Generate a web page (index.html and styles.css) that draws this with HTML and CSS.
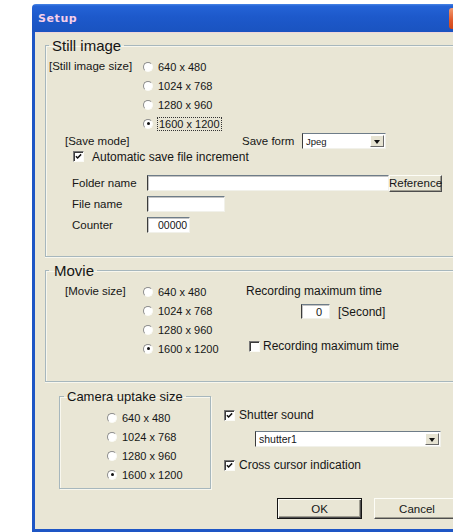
FILE: index.html
```html
<!DOCTYPE html>
<html lang="en">
<head>
<meta charset="utf-8">
<title>Setup</title>
<link rel="stylesheet" href="styles.css">
</head>
<body>
<div class="window">
  <div class="titlebar">
    <span class="title">Setup</span>
    <span class="close"></span>
  </div>
  <div class="client">

    <fieldset class="group group-still">
      <legend>Still image</legend>
      <div class="size-block">
        <div class="size-label">[Still image size]</div>
        <div class="radio-list">
          <div class="radio"><i class="rb"></i>640 x 480</div>
          <div class="radio"><i class="rb"></i>1024 x 768</div>
          <div class="radio"><i class="rb"></i>1280 x 960</div>
          <div class="radio"><i class="rb on"></i><span class="focus">1600 x 1200</span></div>
        </div>
      </div>
      <div class="save-row">
        <span class="save-mode">[Save mode]</span>
        <span class="save-form">Save form</span>
        <span class="combo combo-format"><span class="combo-text">Jpeg</span><span class="combo-btn"></span></span>
      </div>
      <div class="check auto-inc">
        <i class="cb"><svg viewBox="0 0 11 11"><path d="M2.3 5.1 4.4 7.3 8.7 2.9"/></svg></i>Automatic save file increment
      </div>
      <div class="fields">
        <span class="field-label">Folder name</span>
        <span class="folder-row"><span class="edit edit-folder"></span><span class="btn btn-ref">Reference</span></span>
        <span class="field-label">File name</span>
        <span class="edit edit-file"></span>
        <span class="field-label">Counter</span>
        <span class="edit edit-counter">00000</span>
      </div>
    </fieldset>

    <fieldset class="group group-movie">
      <legend>Movie</legend>
      <div class="movie-body">
        <div class="size-block movie-size">
          <div class="size-label">[Movie size]</div>
          <div class="radio-list">
            <div class="radio"><i class="rb"></i>640 x 480</div>
            <div class="radio"><i class="rb"></i>1024 x 768</div>
            <div class="radio"><i class="rb"></i>1280 x 960</div>
            <div class="radio"><i class="rb on"></i>1600 x 1200</div>
          </div>
        </div>
        <div class="rec-col">
          <div class="rec-title">Recording maximum time</div>
          <div class="rec-time">
            <span class="edit edit-seconds">0</span>
            <span class="seconds">[Second]</span>
          </div>
          <div class="check rec-check"><i class="cb"></i>Recording maximum time</div>
        </div>
      </div>
    </fieldset>

    <div class="lower">
      <fieldset class="group group-camera">
        <legend>Camera uptake size</legend>
        <div class="radio-list camera-list">
          <div class="radio"><i class="rb"></i>640 x 480</div>
          <div class="radio"><i class="rb"></i>1024 x 768</div>
          <div class="radio"><i class="rb"></i>1280 x 960</div>
          <div class="radio"><i class="rb on"></i>1600 x 1200</div>
        </div>
      </fieldset>
      <div class="camera-side">
        <div class="check shutter-check">
          <i class="cb"><svg viewBox="0 0 11 11"><path d="M2.3 5.1 4.4 7.3 8.7 2.9"/></svg></i>Shutter sound
        </div>
        <span class="combo combo-sound"><span class="combo-text">shutter1</span><span class="combo-btn"></span></span>
        <div class="check cross-check">
          <i class="cb"><svg viewBox="0 0 11 11"><path d="M2.3 5.1 4.4 7.3 8.7 2.9"/></svg></i>Cross cursor indication
        </div>
      </div>
    </div>

    <div class="actions">
      <span class="btn btn-default">OK</span>
      <span class="btn btn-cancel">Cancel</span>
    </div>
  </div>
</div>
</body>
</html>
```

FILE: styles.css
```css
* {
  box-sizing: border-box;
}

html,
body {
  margin: 0;
  padding: 0;
  background: #fff;
  overflow: hidden;
}

body {
  width: 453px;
  height: 532px;
  font-family: "Liberation Sans", Arial, sans-serif;
  font-size: 12px;
  color: #161616;
}

/* window frame: the dialog runs on past the right edge of the view */
.window {
  margin: 4px 0 0 32px;
  width: 421px;
  height: 528px;
  display: flex;
  flex-direction: column;
}

.titlebar {
  flex: 0 0 28px;
  display: flex;
  align-items: center;
  justify-content: space-between;
  padding: 0 0 0 6px;
  background: linear-gradient(180deg, #4a86e6 0, #2463d6 2px, #1d59cb 45%, #1a53c0 100%);
  border-top-left-radius: 4px;
}

.title {
  font-family: "DejaVu Sans", Verdana, sans-serif;
  font-weight: bold;
  font-size: 11px;
  letter-spacing: 0.6px;
  color: #f6cfe9;
}

.close {
  width: 4px;
  height: 21px;
  border-radius: 3px 0 0 3px;
  background: linear-gradient(180deg, #f29a6e, #e0582a 60%, #d04818);
}

.client {
  flex: 1;
  display: flex;
  flex-direction: column;
  background: #e9e6d5;
  border-left: 3px solid #1e56c5;
  border-bottom: 3px solid #1e56c5;
  box-shadow: inset 0 1px 0 #efd6da;
  padding: 5px 0 0 10px;
}

/* group boxes */
.group {
  margin: 0;
  padding: 0 0 0 3px;
  min-width: 0;
  border: 1px solid #a7b7bd;
  border-right: 0;
  box-shadow: inset 1px 1px 0 #f8f7ee, 0 1px 0 #f8f7ee;
}

.group legend {
  padding: 0 3px;
  font-size: 15px;
  line-height: 17px;
  color: #141414;
}

.group-still {
  padding-top: 3px;
  padding-bottom: 23px;
}

.group-movie {
  margin-top: 5px;
  padding-top: 3px;
  padding-bottom: 23px;
}

.group-movie legend {
  padding-left: 5px;
}

/* radio buttons */
.size-block {
  display: flex;
}

.size-label {
  width: 94px;
  line-height: 19px;
  font-size: 11.5px;
}

.radio-list {
  display: flex;
  flex-direction: column;
}

.radio {
  height: 19px;
  display: flex;
  align-items: center;
  gap: 5px;
  font-size: 11px;
}

.rb {
  position: relative;
  width: 10px;
  height: 10px;
  border-radius: 50%;
  background: #fff;
  border: 1px solid;
  border-color: #8c8c8c #fbfbf6 #fbfbf6 #8c8c8c;
}

.rb.on::after {
  content: "";
  position: absolute;
  left: 2.5px;
  top: 2.5px;
  width: 3px;
  height: 3px;
  border-radius: 50%;
  background: #111;
}

.focus {
  outline: 1px dotted #333;
  outline-offset: 0;
  padding: 0 1px;
}

/* check boxes */
.check {
  display: flex;
  align-items: center;
}

.cb {
  display: inline-flex;
  width: 11px;
  height: 11px;
  background: #fff;
  border: 1px solid;
  border-color: #777 #fbfbf6 #fbfbf6 #777;
  box-shadow: inset 1px 1px 0 #3a3a3a;
}

.cb svg {
  width: 100%;
  height: 100%;
}

.cb path {
  fill: none;
  stroke: #111;
  stroke-width: 1.8;
}

/* still image section */
.save-row {
  display: flex;
  align-items: center;
  height: 16px;
}

.save-mode {
  margin-left: 16px;
  width: 177px;
  font-size: 11.5px;
}

.save-form {
  width: 60px;
  font-size: 11.5px;
}

.auto-inc {
  height: 15px;
  margin-left: 24px;
  gap: 8px;
}

.fields {
  margin: 11px 0 0 23px;
  display: grid;
  grid-template-columns: 75px auto;
  grid-auto-rows: 16px;
  row-gap: 5px;
  align-items: center;
  justify-items: start;
}

.field-label {
  font-size: 11.5px;
}

.folder-row {
  display: flex;
  align-items: center;
}

/* edit fields and combos */
.edit {
  display: inline-flex;
  align-items: center;
  height: 16px;
  background: #fff;
  border: 1px solid;
  border-color: #6e7c88 #f1f1ea #f1f1ea #3c3c3c;
  box-shadow: inset 1px 1px 0 #c4c4c4;
  font-size: 11px;
}

.edit-folder {
  width: 242px;
}

.edit-file {
  width: 78px;
}

.edit-counter {
  width: 43px;
  padding-left: 10px;
  font-size: 10.5px;
}

.combo {
  display: inline-flex;
  align-items: stretch;
  height: 16px;
  background: #fff;
  border: 1px solid;
  border-color: #6e7c88 #f1f1ea #f1f1ea #3c3c3c;
}

.combo-text {
  flex: 1;
  display: flex;
  align-items: center;
  padding-left: 3px;
  font-size: 9.5px;
}

.combo-btn {
  position: relative;
  width: 14px;
  margin: 1px;
  background: #e6e3d2;
  border: 1px solid;
  border-color: #fff #6a6a6a #6a6a6a #fff;
}

.combo-btn::after {
  content: "";
  position: absolute;
  left: 3px;
  top: 4px;
  border-style: solid;
  border-width: 4px 3.5px 0 3.5px;
  border-color: #111 transparent transparent transparent;
}

.combo-format {
  width: 84px;
}

/* buttons */
.btn {
  display: inline-flex;
  align-items: center;
  justify-content: center;
  height: 21px;
  width: 85px;
  background: #e9e6d5;
  border: 1px solid;
  border-color: #fdfdf7 #4e4e4e #4e4e4e #fdfdf7;
  box-shadow: inset -1px -1px 0 #a09e91;
  font-size: 11.5px;
}

.btn-ref {
  width: 53px;
  height: 17px;
}

.btn-default {
  border: 1px solid #151515;
  box-shadow: inset 1px 1px 0 #fdfdf7, inset -1px -1px 0 #4e4e4e, inset -2px -2px 0 #a09e91;
}

/* the cancel button is cut by the right edge of the view */
.btn-cancel {
  width: 79px;
  padding-left: 6px;
  border-right: 0;
  box-shadow: inset 0 -1px 0 #a09e91;
}

/* movie section */
.movie-body {
  display: flex;
}

.movie-size {
  width: 197px;
}

.movie-size .size-label {
  padding-left: 16px;
}

.rec-col {
  display: flex;
  flex-direction: column;
}

.rec-title {
  line-height: 19px;
}

.rec-time {
  display: flex;
  align-items: center;
  margin-top: 3px;
  height: 15px;
}

.edit-seconds {
  width: 29px;
  height: 15px;
  margin-left: 55px;
  justify-content: flex-end;
  padding-right: 7px;
}

.seconds {
  margin-left: 8px;
}

.rec-check {
  height: 16px;
  margin: 19px 0 0 3px;
  gap: 3px;
}

/* camera section */
.lower {
  display: flex;
  align-items: flex-start;
  margin-top: 7px;
}

.group-camera {
  margin-left: 14px;
  width: 152px;
  padding: 4px 0 4px 4px;
  border-right: 1px solid #a7b7bd;
  box-shadow: inset 1px 1px 0 #f8f7ee, 1px 1px 0 #f8f7ee;
}

.group-camera legend {
  font-size: 13px;
  line-height: 15px;
}

.camera-list {
  margin-left: 43px;
}

.camera-side {
  display: flex;
  flex-direction: column;
  align-items: flex-start;
  margin: 18px 0 0 13px;
}

.shutter-check,
.cross-check {
  height: 16px;
  gap: 4px;
}

.combo-sound {
  width: 186px;
  margin: 8px 0 0 31px;
}

.combo-sound .combo-text {
  font-size: 10.5px;
}

.cross-check {
  margin-top: 10px;
}

.actions {
  display: flex;
  justify-content: flex-end;
  gap: 12px;
  margin-top: 9px;
}
```
